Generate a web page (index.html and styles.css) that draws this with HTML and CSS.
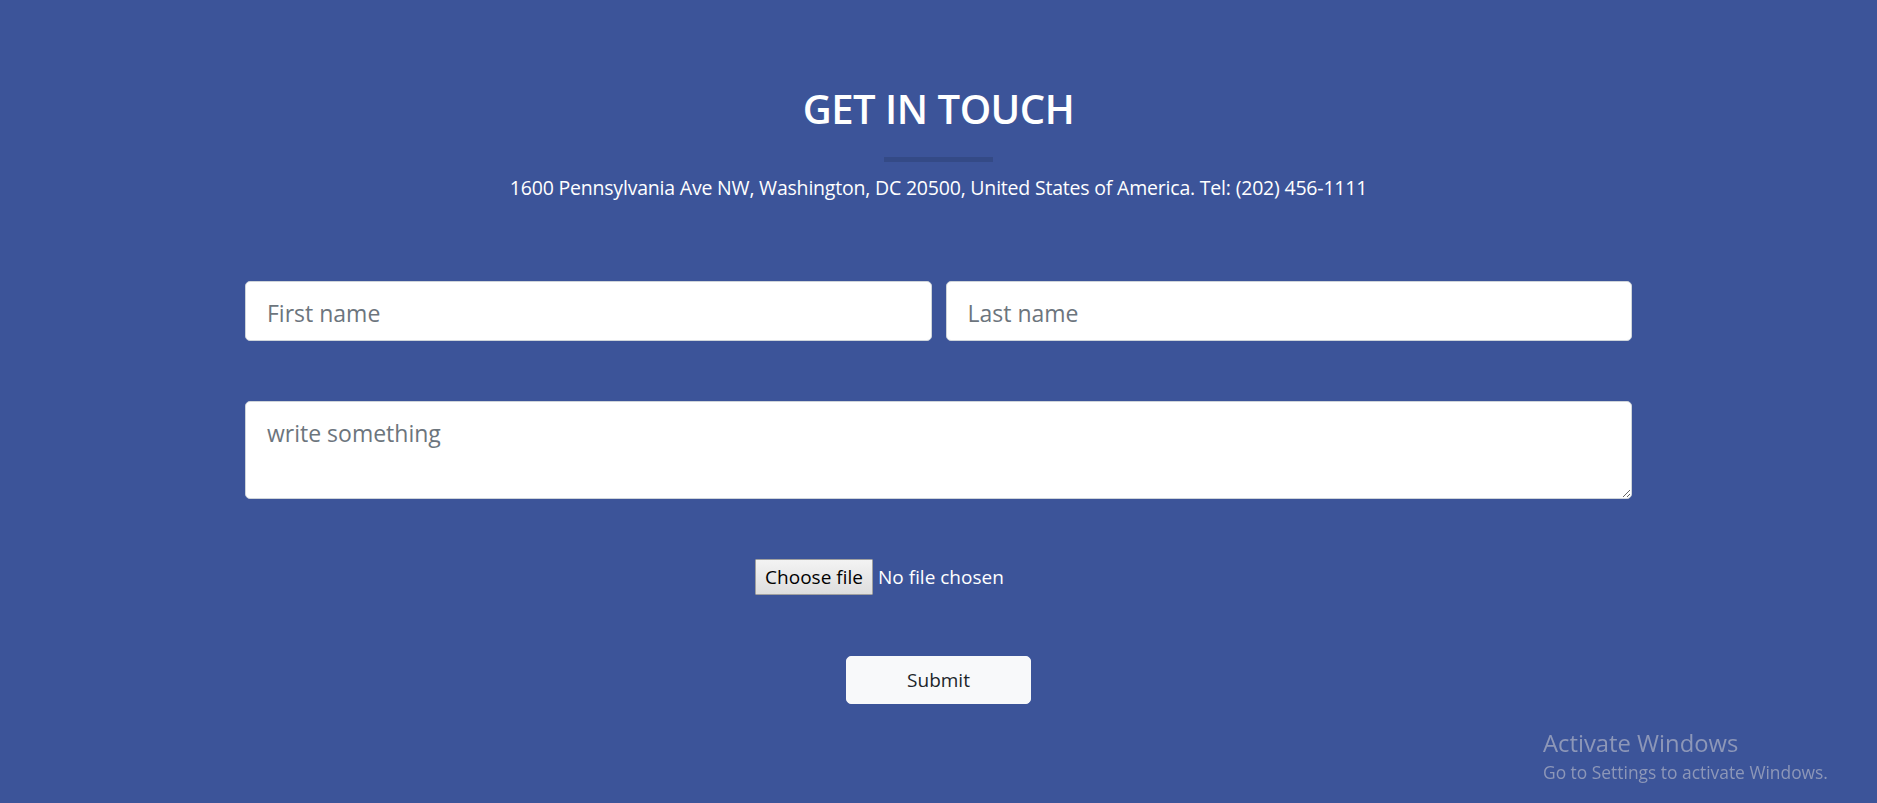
FILE: index.html
```html
<!DOCTYPE html>
<html lang="en">
<head>
<meta charset="utf-8">
<title>Get in touch</title>
<link rel="stylesheet" href="styles.css">
</head>
<body>
<section class="contact">
  <h2 class="title">GET IN TOUCH</h2>
  <div class="bar"></div>
  <p class="address">1600 Pennsylvania Ave NW, Washington, DC 20500, United States of America. Tel: (202) 456-1111</p>
  <form class="form">
    <div class="row">
      <input class="field" type="text" placeholder="First name">
      <input class="field" type="text" placeholder="Last name">
    </div>
    <textarea class="field area" placeholder="write something"></textarea>
    <div class="file-row">
      <label class="file">
        <span class="file-btn">Choose file</span>
        <span class="file-name">No file chosen</span>
      </label>
    </div>
    <div class="submit-row">
      <button type="button" class="submit">Submit</button>
    </div>
  </form>
</section>
<div class="watermark">
  <div class="wm-title">Activate Windows</div>
  <div class="wm-sub">Go to Settings to activate Windows.</div>
</div>
</body>
</html>
```
FILE: styles.css
```css
html, body {
  margin: 0;
  height: 100%;
}
body {
  background: #3c5499;
  font-family: "Open Sans", "Noto Sans", sans-serif;
  color: #fff;
  overflow: hidden;
}
.contact {
  width: 1387px;
  margin: 0 auto;
  padding-top: 84px;
  display: flex;
  flex-direction: column;
  align-items: center;
}
.title {
  margin: 0;
  font-size: 40px;
  font-weight: 600;
  line-height: 50px;
  letter-spacing: -0.5px;
}
.bar {
  width: 109px;
  height: 5px;
  background: #344a86;
  margin-top: 23px;
}
.address {
  margin: 11px 0 0;
  font-size: 19.5px;
  line-height: 30px;
  letter-spacing: -0.2px;
}
.form {
  width: 100%;
  margin-top: 78px;
  display: flex;
  flex-direction: column;
}
.row {
  display: flex;
  gap: 14px;
}
.field {
  flex: 1;
  box-sizing: border-box;
  height: 60px;
  border: 1px solid #ced4da;
  border-radius: 5px;
  background: #fff;
  padding: 3px 21px 0;
  font-family: inherit;
  font-size: 23px;
  color: #495057;
  outline: none;
}
.field::placeholder {
  color: #6c757d;
}
.area {
  flex: none;
  margin-top: 60px;
  height: 98px;
  padding: 14px 21px 10px;
  resize: vertical;
  line-height: 1.5;
}
.file-row {
  margin-top: 60px;
  display: flex;
  justify-content: center;
}
.file {
  width: 367px;
  display: flex;
  align-items: center;
  gap: 5px;
  font-size: 19px;
}
.file-btn {
  box-sizing: border-box;
  height: 36px;
  width: 118px;
  display: flex;
  align-items: center;
  justify-content: center;
  color: #000;
  background: linear-gradient(#f3f3f3, #dedede);
  border: 1px solid #a0a0a0;
  border-radius: 1px;
}
.file-name {
  color: #fff;
}
.submit-row {
  margin-top: 61px;
  display: flex;
  justify-content: center;
}
.submit {
  width: 185px;
  height: 48px;
  border: 1px solid #f8f9fa;
  border-radius: 5px;
  background: #f8f9fa;
  color: #212529;
  font-family: inherit;
  font-size: 19px;
  cursor: pointer;
}
.watermark {
  position: fixed;
  left: 1543px;
  top: 727px;
  color: #8d97b8;
}
.wm-title {
  font-size: 23.8px;
  line-height: 32px;
}
.wm-sub {
  font-size: 17.4px;
  line-height: 26px;
}
```
